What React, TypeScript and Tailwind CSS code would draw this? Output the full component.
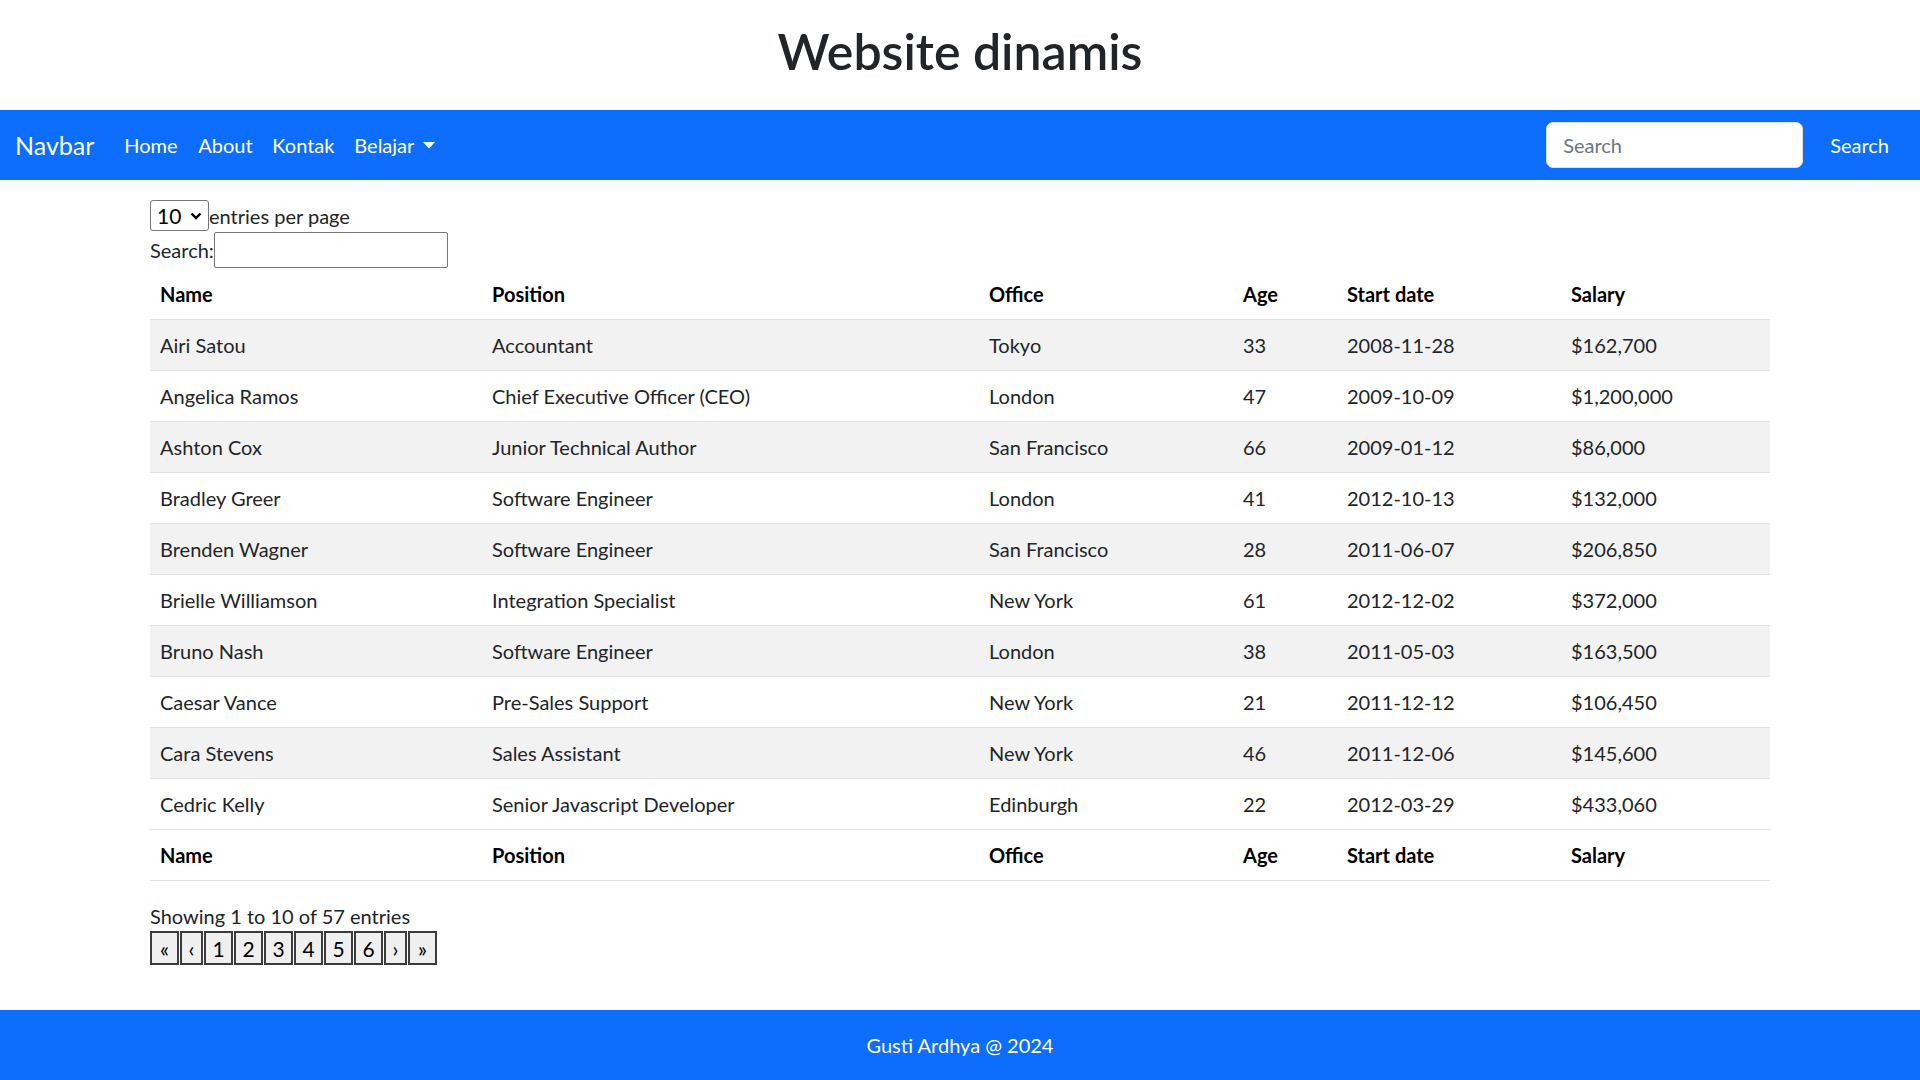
import React from "react";

const rows = [
  ["Airi Satou", "Accountant", "Tokyo", "33", "2008-11-28", "$162,700"],
  ["Angelica Ramos", "Chief Executive Officer (CEO)", "London", "47", "2009-10-09", "$1,200,000"],
  ["Ashton Cox", "Junior Technical Author", "San Francisco", "66", "2009-01-12", "$86,000"],
  ["Bradley Greer", "Software Engineer", "London", "41", "2012-10-13", "$132,000"],
  ["Brenden Wagner", "Software Engineer", "San Francisco", "28", "2011-06-07", "$206,850"],
  ["Brielle Williamson", "Integration Specialist", "New York", "61", "2012-12-02", "$372,000"],
  ["Bruno Nash", "Software Engineer", "London", "38", "2011-05-03", "$163,500"],
  ["Caesar Vance", "Pre-Sales Support", "New York", "21", "2011-12-12", "$106,450"],
  ["Cara Stevens", "Sales Assistant", "New York", "46", "2011-12-06", "$145,600"],
  ["Cedric Kelly", "Senior Javascript Developer", "Edinburgh", "22", "2012-03-29", "$433,060"],
];

const headers = ["Name", "Position", "Office", "Age", "Start date", "Salary"];
const widths = ["w-[332px]", "w-[497px]", "w-[254px]", "w-[104px]", "w-[224px]", "w-[209px]"];

const pages = [
  { label: "«", w: "w-[29px]" },
  { label: "‹", w: "w-[23px]" },
  { label: "1", w: "w-[29px]" },
  { label: "2", w: "w-[29px]" },
  { label: "3", w: "w-[29px]" },
  { label: "4", w: "w-[29px]" },
  { label: "5", w: "w-[29px]" },
  { label: "6", w: "w-[29px]" },
  { label: "›", w: "w-[23px]" },
  { label: "»", w: "w-[29px]" },
];

function HeaderRow() {
  return (
    <tr className="border-b border-[#dee2e6]">
      {headers.map((h, i) => (
        <th key={h} className={`${widths[i]} px-[10px] py-[10px] text-left font-bold leading-[30px] text-black`}>
          {h}
        </th>
      ))}
    </tr>
  );
}

export default function App() {
  return (
    <div className="min-h-[1080px] bg-white text-[20px] text-[#212529] font-['Lato','Liberation_Sans',sans-serif] flex flex-col">
      <h1 className="pt-[21px] pb-[29px] text-center text-[50px] leading-[60px] font-semibold text-[#212529]">
        Website dinamis
      </h1>

      <nav className="h-[70px] bg-[#0d6efd] px-[15px] flex items-center justify-between">
        <div className="flex items-center">
          <span className="text-[25px] text-white mr-[20px] leading-[38px]">Navbar</span>
          <a className="w-[74px] px-[10px] text-white leading-[30px]">Home</a>
          <a className="w-[74px] px-[10px] text-white leading-[30px]">About</a>
          <a className="w-[82px] px-[10px] text-white leading-[30px]">Kontak</a>
          <a className="px-[10px] text-white leading-[30px] flex items-center">
            Belajar
            <svg width="12" height="7" viewBox="0 0 12 7" className="ml-[9px]">
              <polygon points="0,0 12,0 6,6.5" fill="white" />
            </svg>
          </a>
        </div>
        <div className="flex items-center">
          <div className="w-[257px] h-[46px] rounded-[7px] bg-white border border-[#dee2e6] flex items-center pl-[16px] text-[#6c757d]">
            Search
          </div>
          <button className="ml-[12px] h-[46px] pl-[15px] pr-[16px] text-white">Search</button>
        </div>
      </nav>

      <main className="w-[1620px] mx-auto pt-[20px]">
        <div className="flex items-center h-[31px]">
          <div className="w-[59px] h-[31px] border border-[#767676] rounded-[3px] flex items-center justify-between pl-[6px] pr-[6px] text-black">
            <span className="leading-[28px] text-[21px]">10</span>
            <svg width="12" height="8" viewBox="0 0 12 8">
              <polyline points="1.5,1.5 6,6 10.5,1.5" fill="none" stroke="black" strokeWidth="2.4" />
            </svg>
          </div>
          <span className="leading-[30px]">entries per page</span>
        </div>
        <div className="flex items-center h-[38px]">
          <span className="leading-[30px]">Search:</span>
          <div className="w-[234px] h-[36px] border border-[#767676] rounded-[2px] bg-white" />
        </div>

        <table className="w-[1620px] table-fixed border-collapse">
          <thead>
            <HeaderRow />
          </thead>
          <tbody>
            {rows.map((r, i) => (
              <tr key={r[0]} className={`border-b border-[#dee2e6] ${i % 2 === 0 ? "bg-[#f2f2f2]" : "bg-white"}`}>
                {r.map((c, j) => (
                  <td key={j} className="px-[10px] py-[10px] leading-[30px] text-left">
                    {c}
                  </td>
                ))}
              </tr>
            ))}
          </tbody>
          <tfoot>
            <HeaderRow />
          </tfoot>
        </table>

        <div className="mt-[20px] leading-[30px]">Showing 1 to 10 of 57 entries</div>
        <div className="flex gap-[1px]">
          {pages.map((p) => (
            <div
              key={p.label}
              className={`${p.w} h-[34px] border-2 border-[#3c3c3c] bg-[#efefef] flex items-center justify-center text-black text-[21px] leading-none`}
            >
              {p.label}
            </div>
          ))}
        </div>
      </main>

      <footer className="mt-[45px] h-[70px] bg-[#0d6efd] flex items-center justify-center text-white">
        Gusti Ardhya @ 2024
      </footer>
    </div>
  );
}
